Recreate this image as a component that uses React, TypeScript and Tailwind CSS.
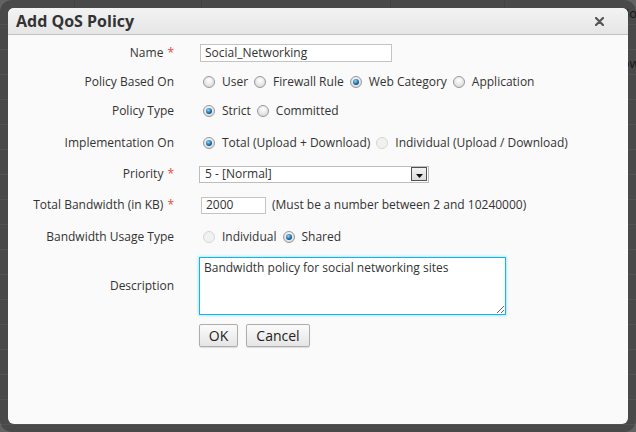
import type { ReactNode } from 'react';

const bgRows = [
  'Action', '', 'Allow', '', '', '', 'r', 'ns', '', '', '', '', '', '', 'u', '', '',
];

function Radio({ checked, disabled }: { checked?: boolean; disabled?: boolean }) {
  return (
    <span
      className={
        disabled
          ? 'flex h-[12px] w-[12px] shrink-0 items-center justify-center rounded-full border border-[#d6d6d6] bg-[#f1f1f1]'
          : 'flex h-[12px] w-[12px] shrink-0 items-center justify-center rounded-full border border-[#979797] bg-[radial-gradient(circle_at_50%_35%,#ffffff,#d2d2d2)]'
      }
    >
      {checked && (
        <span className="h-[6px] w-[6px] rounded-full bg-[radial-gradient(circle_at_40%_35%,#8fd4ff,#0b5a92_65%,#063a63)]" />
      )}
    </span>
  );
}

function Option({ label, checked, disabled }: { label: string; checked?: boolean; disabled?: boolean }) {
  return (
    <span className="mr-[6px] flex items-center gap-[7px]">
      <Radio checked={checked} disabled={disabled} />
      <span>{label}</span>
    </span>
  );
}

function Row({
  label,
  required,
  height,
  children,
}: {
  label: string;
  required?: boolean;
  height: string;
  children: ReactNode;
}) {
  return (
    <div className={`flex items-center ${height}`}>
      <div className="w-[166px] shrink-0 text-right">
        {label}
        {required && <span className="ml-[4px] text-[#e8473d]">*</span>}
      </div>
      <div className="ml-[25px] flex items-center">{children}</div>
    </div>
  );
}

export default function App() {
  return (
    <div className="relative h-[432px] w-[636px] overflow-hidden bg-[#626262] font-['Open_Sans',sans-serif] text-[12px] text-[#333]">
      {/* page behind the dialog */}
      <div className="flex h-full">
        <div className="flex w-[20px] flex-col bg-[#1c1c1c]">
          <div className="h-[128px] border-b border-[#2a2a2a]" />
          <div className="h-[24px] bg-[#0d3d4c]" />
          <div className="h-[44px] bg-[#0e0e0e]" />
          <div className="h-[26px] border-b border-[#2a2a2a]" />
          <div className="flex-1" />
        </div>
        <div className="flex flex-1 flex-col">
          {bgRows.map((t, i) => (
            <div key={i} className="flex h-[25px] shrink-0 border-b border-[#6e6e6e]">
              <div className="w-[75px] border-r border-[#585858]" />
              <div className="w-[127px] border-r border-[#585858]" />
              <div className="w-[189px] border-r border-[#585858]" />
              <div className="w-[114px] border-r border-[#585858]" />
              <div className="flex-1 pl-[102px] pt-[4px] text-[13px] text-[#1e1e1e]">{t}</div>
            </div>
          ))}
        </div>
      </div>

      {/* dialog */}
      <div className="absolute inset-0 rounded-[12px] bg-black/25 p-[8px]">
        <div className="flex h-full flex-col overflow-hidden rounded-[6px] bg-[#fafafa]">
          <div className="flex h-[27px] shrink-0 items-center justify-between border-b border-[#c2c2c2] bg-[linear-gradient(#f3f3f3,#e6e6e6)] pl-[8px] pr-[24px]">
            <span className="text-[16px] font-bold text-[#333]">Add QoS Policy</span>
            <svg width="9" height="9" viewBox="0 0 9 9">
              <path d="M1 1L8 8M8 1L1 8" stroke="#555" strokeWidth="2.2" strokeLinecap="round" />
            </svg>
          </div>

          <div className="flex flex-col pt-[4px]">
            <Row label="Name" required height="h-[28px]">
              <input
                readOnly
                value="Social_Networking"
                className="ml-[1px] h-[18px] w-[192px] border border-[#c4c4c4] bg-white px-[4px] text-[12px] text-[#333] outline-none"
              />
            </Row>
            <Row label="Policy Based On" height="h-[30px]">
              <div className="ml-[4px] flex items-center">
                <Option label="User" />
                <Option label="Firewall Rule" />
                <Option label="Web Category" checked />
                <Option label="Application" />
              </div>
            </Row>
            <Row label="Policy Type" height="h-[28px]">
              <div className="ml-[4px] flex items-center">
                <Option label="Strict" checked />
                <Option label="Committed" />
              </div>
            </Row>
            <Row label="Implementation On" height="h-[36px]">
              <div className="ml-[4px] flex items-center">
                <Option label="Total (Upload + Download)" checked />
                <Option label="Individual (Upload / Download)" disabled />
              </div>
            </Row>
            <Row label="Priority" required height="h-[26px]">
              <div className="flex h-[17px] w-[230px] items-center justify-between border border-[#bdbdbd] bg-white pl-[5px] pr-[1px]">
                <span>5 - [Normal]</span>
                <span className="flex h-[14px] w-[16px] items-center justify-center border border-[#505050] bg-[linear-gradient(#f2f2f2,#dcdcdc)]">
                  <svg width="7" height="4" viewBox="0 0 7 4" className="mt-[3px]">
                    <path d="M0 0H7L3.5 4Z" fill="#111" />
                  </svg>
                </span>
              </div>
            </Row>
            <Row label="Total Bandwidth (in KB)" required height="h-[36px]">
              <input
                readOnly
                value="2000"
                className="ml-[2px] h-[17px] w-[65px] border border-[#c4c4c4] bg-white px-[4px] text-[12px] text-[#333] outline-none"
              />
              <span className="ml-[6px]">(Must be a number between 2 and 10240000)</span>
            </Row>
            <Row label="Bandwidth Usage Type" height="h-[28px]">
              <div className="ml-[4px] flex items-center">
                <Option label="Individual" disabled />
                <Option label="Shared" checked />
              </div>
            </Row>
            <Row label="Description" height="h-[70px]">
              <textarea
                readOnly
                value="Bandwidth policy for social networking sites"
                className="h-[58px] w-[307px] border border-[#12b5e8] bg-white px-[4px] py-[1px] text-[12px] leading-[18px] text-[#333] shadow-[0_0_3px_#7fd6f5] outline-none"
              />
            </Row>
            <div className="ml-[191px] mt-[3px] flex gap-[8px]">
              <button className="h-[23px] w-[39px] rounded-[2px] border border-[#adadad] bg-[linear-gradient(#fbfbfb,#e5e5e5)] text-[14px] text-[#222] shadow-[0_1px_1px_rgba(0,0,0,0.12)]">
                OK
              </button>
              <button className="h-[23px] w-[64px] rounded-[2px] border border-[#adadad] bg-[linear-gradient(#fbfbfb,#e5e5e5)] text-[14px] text-[#222] shadow-[0_1px_1px_rgba(0,0,0,0.12)]">
                Cancel
              </button>
            </div>
          </div>
        </div>
      </div>
    </div>
  );
}
